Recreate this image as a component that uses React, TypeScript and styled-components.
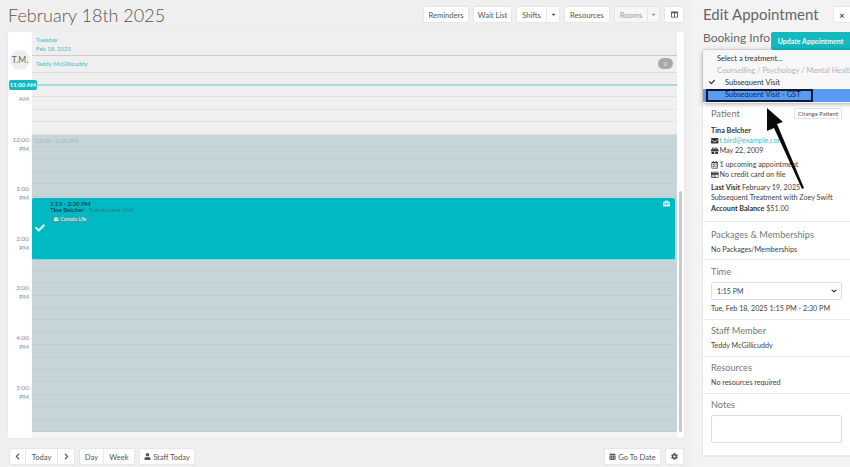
import React from "react";
import styled, { createGlobalStyle } from "styled-components";
import { FaEnvelope, FaGift, FaRegCalendarAlt, FaRegCreditCard, FaUser, FaCalendarAlt, FaCog, FaBriefcase, FaCheck, FaChevronLeft, FaChevronRight, FaCaretDown, FaColumns, FaChevronDown } from "react-icons/fa";

const Global = createGlobalStyle`
  html, body { margin: 0; padding: 0; }
  body { font-family: "Lato", "Open Sans", sans-serif; background: #efefef; color: #444; }
  * { box-sizing: border-box; }
`;

const SLOT = 12.4;

const Page = styled.div`
  position: relative;
  width: 850px;
  height: 467px;
  overflow: hidden;
  display: flex;
  background: #efefef;
`;
const Main = styled.div`
  width: 692px;
  flex: none;
  padding: 6px 8px 0 8px;
  display: flex;
  flex-direction: column;
`;
const TopBar = styled.div`
  height: 26px;
  display: flex;
  justify-content: space-between;
  align-items: flex-start;
`;
const Title = styled.h1`
  margin: -2px 0 0;
  font-size: 18px;
  line-height: 22px;
  font-weight: 300;
  color: #555;
`;
const Toolbar = styled.div`
  display: flex;
  gap: 4px;
`;
const Group = styled.div`
  display: flex;
`;
const Btn = styled.button<{ $w: number; $joined?: "l" | "r" | "m"; $muted?: boolean }>`
  width: ${(p) => p.$w}px;
  height: 17px;
  padding: 0;
  display: flex;
  align-items: center;
  justify-content: center;
  gap: 2px;
  font: 400 7.6px "Lato", sans-serif;
  color: ${(p) => (p.$muted ? "#999" : "#555")};
  background: ${(p) => (p.$muted ? "#f6f6f6" : "#fff")};
  border: 1px solid #e6e6e6;
  border-left-width: ${(p) => (p.$joined === "r" || p.$joined === "m" ? 0 : 1)}px;
  border-radius: ${(p) => (p.$joined === "l" ? "2px 0 0 2px" : p.$joined === "r" ? "0 2px 2px 0" : p.$joined === "m" ? "0" : "2px")};
  svg { font-size: 7px; }
`;
const Calendar = styled.div`
  position: relative;
  width: 676px;
  height: 406px;
  display: flex;
  background: #fff;
  border-radius: 2px;
  box-shadow: 0 0 1px rgba(0, 0, 0, 0.2);
  overflow: hidden;
`;
const Gutter = styled.div`
  width: 24px;
  flex: none;
  display: flex;
  flex-direction: column;
  background: #fff;
`;
const GutterHead = styled.div`
  height: 40.6px;
  display: flex;
  align-items: flex-end;
  justify-content: center;
  padding-bottom: 3px;
`;
const Avatar = styled.div`
  width: 20px;
  height: 20px;
  border-radius: 50%;
  background: #eee;
  color: #666;
  font-size: 8.5px;
  flex: none;
  display: flex;
  align-items: center;
  justify-content: center;
`;
const Hour = styled.div<{ $h: number }>`
  height: ${(p) => p.$h}px;
  padding: 0 3px 0 0;
  font-size: 6.4px;
  line-height: 9px;
  color: #8c8c8c;
  text-align: right;
`;
const Column = styled.div`
  position: relative;
  width: 645px;
  flex: none;
  display: flex;
  flex-direction: column;
`;
const DayHead = styled.div`
  height: 24px;
  padding: 3px 0 0 4px;
  background: #efefef;
  border-bottom: 1px solid #ccc;
  color: #45c0c6;
  font-size: 6px;
  line-height: 9px;
`;
const StaffHead = styled.div`
  height: 16.6px;
  background: #efefef;
  border-bottom: 1px solid #ddd;
  color: #45c0c6;
  font-size: 6px;
  padding-left: 4px;
  padding-right: 4px;
  display: flex;
  align-items: center;
  justify-content: space-between;
`;
const Count = styled.span`
  width: 15px;
  height: 11px;
  background: #a9a9a9;
  color: #eee;
  font-size: 5px;
  border-radius: 6px;
  display: flex;
  align-items: center;
  justify-content: center;
`;
const Slot = styled.div<{ $shaded: boolean }>`
  height: ${SLOT}px;
  background: ${(p) => (p.$shaded ? "#c5d5d9" : "#efefef")};
  border-bottom: 1px solid ${(p) => (p.$shaded ? "#bbced2" : "#e0e0e0")};
  color: #a8b4b7;
  font-size: 6px;
  line-height: 11px;
  padding-left: 3px;
`;
const FooterStrip = styled.div`
  height: 6px;
  background: #f4f4f4;
`;
const NowLine = styled.div`
  position: absolute;
  left: 24px;
  right: 7px;
  top: 52px;
  height: 2px;
  background: #a9dadc;
`;
const NowTag = styled.div`
  position: absolute;
  left: 1px;
  top: 48px;
  width: 28px;
  height: 10px;
  background: #14b9c0;
  border-radius: 2px;
  color: #eafcfc;
  font-size: 6px;
  font-weight: 700;
  line-height: 10px;
  text-align: center;
`;
const Event = styled.div`
  position: absolute;
  left: 24px;
  width: 643px;
  top: 166px;
  height: 62px;
  background: #00b9c2;
  border-radius: 2px;
  border-bottom: 1px solid #7fdde2;
  padding: 2.5px 0 0 18px;
  color: #155a63;
  font-size: 6.1px;
  line-height: 6.5px;
`;
const EventTime = styled.div`
  font-weight: 700;
  color: #134a52;
`;
const EventName = styled.div`
  color: #2c7f88;
  b { color: #134a52; }
`;
const Insurance = styled.span`
  display: inline-flex;
  align-items: center;
  gap: 2px;
  margin: 2px 0 0 2px;
  padding: 0 2px;
  height: 7px;
  background: #26a9b3;
  color: #e6fafb;
  font-size: 5px;
  border-radius: 1px;
  svg { font-size: 4.5px; }
`;
const Tick = styled.div`
  position: absolute;
  left: 3px;
  top: 25px;
  color: #e8fbfc;
  font-size: 10px;
  display: flex;
`;
const CaseIcon = styled.div`
  position: absolute;
  right: 5px;
  top: 2px;
  color: #d5f6f7;
  font-size: 7px;
  display: flex;
`;
const ScrollTrack = styled.div`
  position: absolute;
  right: 2px;
  top: 159px;
  width: 3px;
  height: 241px;
  background: #c8c8c8;
  border-radius: 2px;
`;
const BottomBar = styled.div`
  margin-top: 10px;
  display: flex;
  justify-content: space-between;
  padding-left: 1px;
`;
const Side = styled.aside`
  position: relative;
  flex: 1;
  background: #f3f3f3;
  padding: 4px 0 0 11px;
`;
const SideTitle = styled.h2`
  margin: 0;
  font-size: 15px;
  line-height: 20px;
  font-weight: 400;
  color: #666;
`;
const Close = styled.button`
  position: absolute;
  top: 6px;
  left: 141px;
  width: 17px;
  height: 17px;
  background: #fff;
  border: 1px solid #e6e6e6;
  border-right: 0;
  border-radius: 2px 0 0 2px;
  font: 400 10px "Lato", sans-serif;
  color: #222;
  padding: 0;
`;
const BookingTitle = styled.h3`
  margin: 5px 0 0;
  font-size: 12px;
  line-height: 18px;
  font-weight: 400;
  color: #666;
`;
const UpdateBtn = styled.button`
  position: absolute;
  left: 79px;
  top: 32px;
  width: 79px;
  height: 18px;
  background: #14b9c0;
  border: 0;
  border-radius: 2px 0 0 2px;
  color: #eafcfc;
  font: 700 7px "Lato", sans-serif;
  padding: 0;
`;
const Card = styled.div`
  margin-top: 3px;
  width: 147px;
  background: #fff;
  box-shadow: 0 0 1px rgba(0, 0, 0, 0.25);
  display: flex;
  flex-direction: column;
`;
const Section = styled.section<{ $h: number; $pad?: number }>`
  height: ${(p) => p.$h}px;
  padding: ${(p) => p.$pad ?? 5}px 8px 0;
  border-bottom: 1px solid #e8e8e8;
  font-size: 7.2px;
  line-height: 10px;
  color: #444;
`;
const SectionHead = styled.div`
  display: flex;
  justify-content: space-between;
  align-items: center;
  font-size: 9.2px;
  line-height: 11px;
  color: #777;
`;
const ChangeBtn = styled.button`
  width: 48px;
  height: 11px;
  padding: 0;
  background: #fff;
  border: 1px solid #e2e2e2;
  border-radius: 1px;
  font: 400 6px "Lato", sans-serif;
  color: #555;
`;
const Detail = styled.div<{ $top?: number }>`
  margin-top: ${(p) => p.$top ?? 0}px;
  white-space: nowrap;
  display: flex;
  align-items: center;
  gap: 1px;
  a { color: #3fbcc2; text-decoration: none; }
  svg { font-size: 7.5px; color: #333; flex: none; }
  span b { color: #333; }
`;
const TimeSelect = styled.div`
  margin-top: 5px;
  height: 18px;
  border: 1px solid #ddd;
  border-radius: 2px;
  display: flex;
  align-items: center;
  justify-content: space-between;
  padding: 0 4px 0 5px;
  font-size: 7px;
  svg { font-size: 6px; color: #222; }
`;
const NotesBox = styled.div`
  margin-top: 5px;
  height: 28px;
  border: 1px solid #ddd;
  border-radius: 2px;
  background: #fff;
`;
const Menu = styled.div`
  position: absolute;
  left: 11px;
  top: 50px;
  width: 160px;
  height: 53px;
  background: #f7f7f7;
  border-radius: 4px 0 0 0;
  padding-top: 2.5px;
  box-shadow: 0 1px 5px rgba(0, 0, 0, 0.35);
  font-size: 7.5px;
  line-height: 12px;
  color: #333;
  overflow: hidden;
`;
const MenuItem = styled.div<{ $state?: "disabled" | "selected" | "active" }>`
  height: ${(p) => (p.$state === "active" ? 13 : 12)}px;
  padding-left: ${(p) => (p.$state === "selected" || p.$state === "active" ? 22 : 14)}px;
  position: relative;
  white-space: nowrap;
  color: ${(p) => (p.$state === "disabled" ? "#b4b4b4" : p.$state === "active" ? "#10294f" : "#333")};
  background: ${(p) => (p.$state === "active" ? "#5a9bf2" : "transparent")};
`;
const Focus = styled.div`
  position: absolute;
  left: 3px;
  top: 0;
  width: 107px;
  height: 13px;
  border: 2px solid #101a38;
`;
const CheckMark = styled.span`
  position: absolute;
  left: 6px;
  top: 0;
  font-size: 6px;
`;
const Arrow = styled.svg`
  position: absolute;
  left: 750px;
  top: 100px;
  pointer-events: none;
`;

const hours = [
  { label: "", h: SLOT },
  { label: "AM", h: SLOT * 4 },
  { label: "12:00 PM", h: SLOT * 4 },
  { label: "1:00 PM", h: SLOT * 4 },
  { label: "2:00 PM", h: SLOT * 4 },
  { label: "3:00 PM", h: SLOT * 4 },
  { label: "4:00 PM", h: SLOT * 4 },
  { label: "5:00 PM", h: SLOT * 4 },
];

export default function App() {
  return (
    <Page>
      <Global />
      <Main>
        <TopBar>
          <Title>February 18th 2025</Title>
          <Toolbar>
            <Btn $w={46}>Reminders</Btn>
            <Btn $w={39}>Wait List</Btn>
            <Group>
              <Btn $w={31} $joined="l">Shifts</Btn>
              <Btn $w={13} $joined="r"><FaCaretDown /></Btn>
            </Group>
            <Btn $w={46}>Resources</Btn>
            <Group>
              <Btn $w={34} $joined="l" $muted>Rooms</Btn>
              <Btn $w={12} $joined="r" $muted><FaCaretDown /></Btn>
            </Group>
            <Btn $w={20}><FaColumns /></Btn>
          </Toolbar>
        </TopBar>
        <Calendar>
          <Gutter>
            <GutterHead><Avatar>T.M.</Avatar></GutterHead>
            {hours.map((x, i) => (
              <Hour key={i} $h={x.h}>
                {x.label === "AM" ? <><br />AM</> : x.label}
              </Hour>
            ))}
          </Gutter>
          <Column>
            <DayHead>Tuesday<br />Feb 18, 2025</DayHead>
            <StaffHead>Teddy McGillicuddy<Count>0</Count></StaffHead>
            {Array.from({ length: 29 }).map((_, i) => (
              <Slot key={i} $shaded={i >= 5}>{i === 5 ? "12:00 - 6:00 PM" : ""}</Slot>
            ))}
            <FooterStrip />
          </Column>
          <NowLine />
          <NowTag>11:00 AM</NowTag>
          <Event>
            <EventTime>1:15 - 2:30 PM</EventTime>
            <EventName><b>Tina Belcher</b> - Subsequent Visit</EventName>
            <Insurance><FaBriefcase />Canada Life</Insurance>
            <Tick><FaCheck /></Tick>
            <CaseIcon><FaBriefcase /></CaseIcon>
          </Event>
          <ScrollTrack />
        </Calendar>
        <BottomBar>
          <Toolbar>
            <Group>
              <Btn $w={17} $joined="l"><FaChevronLeft /></Btn>
              <Btn $w={32} $joined="m">Today</Btn>
              <Btn $w={17} $joined="r"><FaChevronRight /></Btn>
            </Group>
            <Group>
              <Btn $w={25} $joined="l">Day</Btn>
              <Btn $w={31} $joined="r">Week</Btn>
            </Group>
            <Btn $w={56}><FaUser />Staff Today</Btn>
          </Toolbar>
          <Toolbar>
            <Btn $w={57}><FaCalendarAlt />Go To Date</Btn>
            <Btn $w={19}><FaCog /></Btn>
          </Toolbar>
        </BottomBar>
      </Main>
      <Side>
        <SideTitle>Edit Appointment</SideTitle>
        <Close>×</Close>
        <BookingTitle>Booking Info</BookingTitle>
        <UpdateBtn>Update Appointment</UpdateBtn>
        <Card>
          <Section $h={53} />
          <Section $h={119}>
            <SectionHead>Patient<ChangeBtn>Change Patient</ChangeBtn></SectionHead>
            <Detail $top={7}><span><b>Tina Belcher</b></span></Detail>
            <Detail><FaEnvelope /><a>t.bird@example.com</a></Detail>
            <Detail><FaGift /><span>May 22, 2009</span></Detail>
            <Detail $top={4}><FaRegCalendarAlt /><span>1 upcoming appointment</span></Detail>
            <Detail><FaRegCreditCard /><span>No credit card on file</span></Detail>
            <Detail $top={3}><span><b>Last Visit</b> February 19, 2025</span></Detail>
            <Detail><span>Subsequent Treatment with Zoey Swift</span></Detail>
            <Detail $top={1}><span><b>Account Balance</b> $51.00</span></Detail>
          </Section>
          <Section $h={38} $pad={7}>
            <SectionHead>Packages &amp; Memberships</SectionHead>
            <Detail $top={5}>No Packages/Memberships</Detail>
          </Section>
          <Section $h={60} $pad={6}>
            <SectionHead>Time</SectionHead>
            <TimeSelect>1:15 PM<FaChevronDown /></TimeSelect>
            <Detail $top={4}>Tue, Feb 18, 2025 1:15 PM - 2:30 PM</Detail>
          </Section>
          <Section $h={37}>
            <SectionHead>Staff Member</SectionHead>
            <Detail $top={5}>Teddy McGillicuddy</Detail>
          </Section>
          <Section $h={37}>
            <SectionHead>Resources</SectionHead>
            <Detail $top={5}>No resources required</Detail>
          </Section>
          <Section $h={62}>
            <SectionHead>Notes</SectionHead>
            <NotesBox />
          </Section>
        </Card>
        <Menu>
          <MenuItem>Select a treatment...</MenuItem>
          <MenuItem $state="disabled">Counselling / Psychology / Mental Health</MenuItem>
          <MenuItem $state="selected"><CheckMark><FaCheck /></CheckMark>Subsequent Visit</MenuItem>
          <MenuItem $state="active"><Focus />Subsequent Visit - GST</MenuItem>
        </Menu>
      </Side>
      <Arrow width="70" height="100" viewBox="0 0 70 100">
        <path d="M17 8 L33 22 L27 24 L54 88 L52 89 L24 28 L17 31 Z" fill="#0a0a0a" />
      </Arrow>
    </Page>
  );
}
